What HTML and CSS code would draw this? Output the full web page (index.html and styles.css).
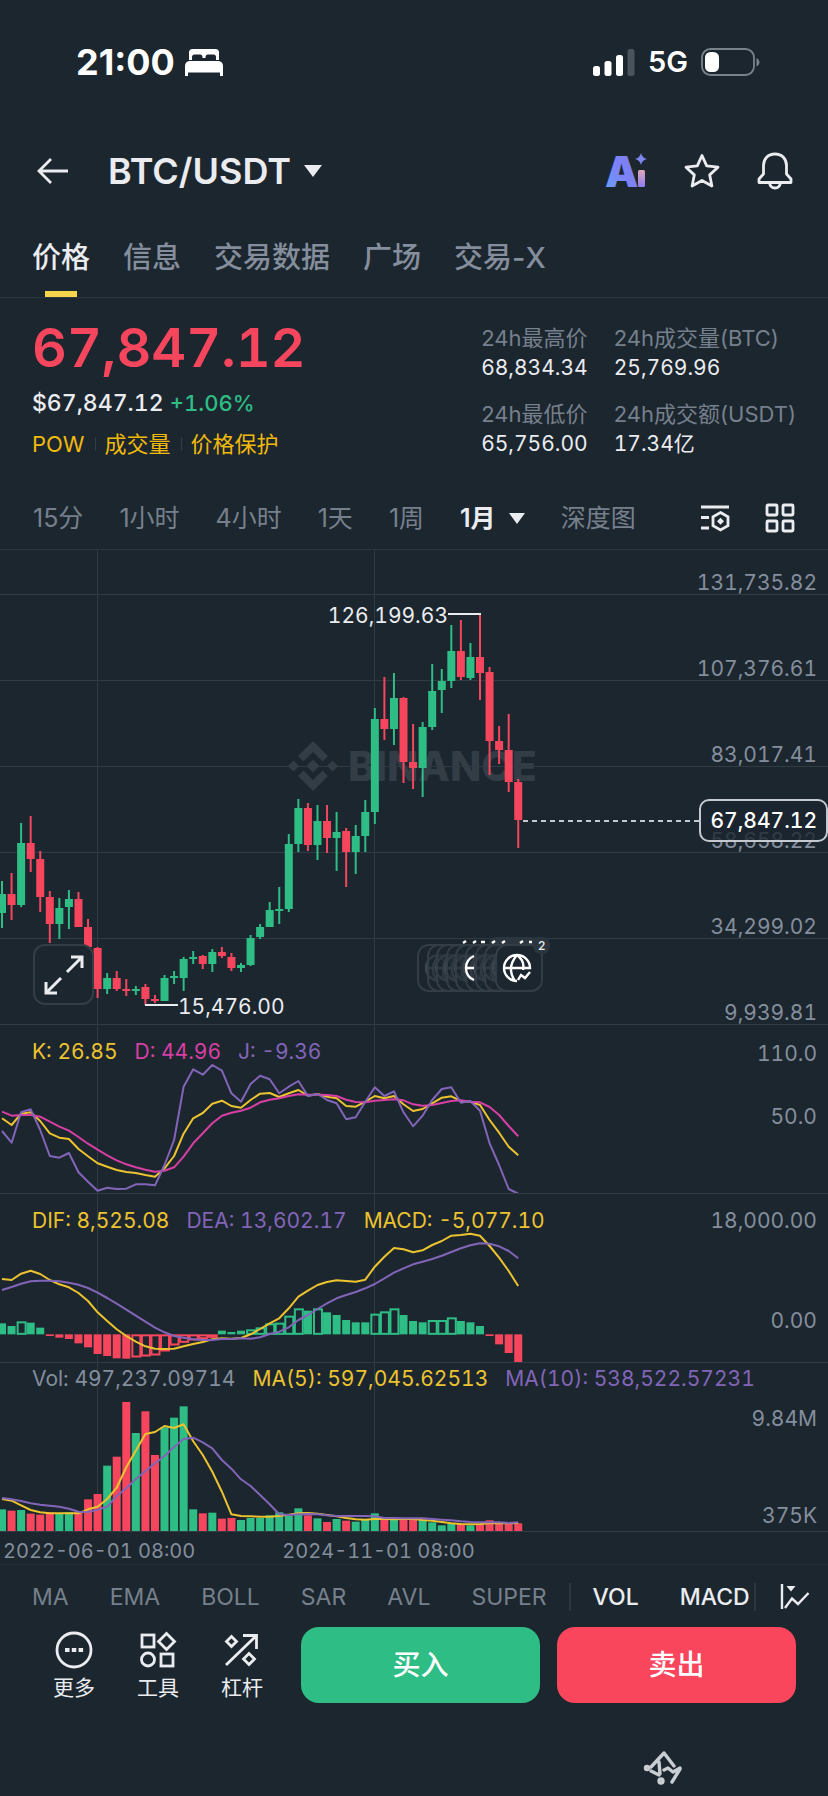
FILE: index.html
```html
<!DOCTYPE html>
<html lang="zh-CN">
<head>
<meta charset="utf-8">
<meta name="viewport" content="width=device-width, initial-scale=1">
<title>BTC/USDT</title>
<link rel="stylesheet" href="styles.css">
</head>
<body>
<div class="app">

  <div class="status">
    <div class="status-left">
      <span class="clock">21:00</span>
      <svg class="icon" width="38" height="27" viewBox="0 0 38 27" fill="#fff"><path d="M4 11V3.500Q4 0 7.500 0h23Q34 0 34 3.500V11h-3V8q0-2.500-2.500-2.500h-5.500q-2.500 0-2.500 2.500v1h-3V8q0-2.500-2.500-2.500H9.500Q7 5.500 7 8v3zM4 12h30q4 1 4 5v10h-3v-3.500H3V27H0V17q0-4 4-5z"/></svg>
    </div>
    <div class="status-right">
      <svg class="icon" width="42" height="27" viewBox="0 0 42 27" fill="#fff"><rect x="0" y="17" width="7" height="10" rx="2.500"/><rect x="11.500" y="12" width="7" height="15" rx="2.500"/><rect x="23" y="6" width="7" height="21" rx="2.500"/><rect x="34.500" y="0" width="7" height="27" rx="2.500" fill="#4a545c"/></svg>
      <span class="network">5G</span>
      <svg class="icon" width="59" height="28" viewBox="0 0 59 28"><rect x="1" y="1" width="52" height="26" rx="8.500" fill="none" stroke="#7b838a" stroke-width="1.800"/><rect x="4" y="4" width="14" height="20" rx="5.500" fill="#fff"/><path d="M55.500 10v8.500q3-1.500 3-4.250t-3-4.250z" fill="#7b838a"/></svg>
    </div>
  </div>

  <header class="header">
    <button class="icon-button" aria-label="返回"><svg class="icon" width="34" height="30" viewBox="0 0 34 30" fill="none" stroke="#eaecef" stroke-width="2.800"><path d="M33 15H4M16 3 4 15l12 12"/></svg></button>
    <button class="pair">BTC/USDT <span class="caret"></span></button>
    <nav class="header-tools">
      <button class="icon-button" aria-label="AI"><svg class="icon" width="42" height="54" viewBox="1 -8 42 54"><defs><linearGradient id="ai" x1="0" y1="1" x2="0.800" y2="0"><stop offset="0" stop-color="#62a8f5"/><stop offset="0.500" stop-color="#7d83f5"/><stop offset="1" stop-color="#7a7df0"/></linearGradient><linearGradient id="stem" x1="0" y1="0" x2="0" y2="1"><stop offset="0" stop-color="#e0a5b8"/><stop offset="1" stop-color="#8f7cf2"/></linearGradient></defs><text class="ai-letter" x="1" y="35" fill="url(#ai)">A</text><rect x="34" y="18" width="7" height="17" rx="1.500" fill="url(#stem)"/><path d="M37 1q1.200 5 6 6-4.800 1-6 6-1.200-5-6-6 4.800-1 6-6z" fill="#7f86f0"/></svg></button>
      <button class="icon-button" aria-label="收藏"><svg class="icon" width="36" height="36" viewBox="0 0 36 36" fill="none" stroke="#eaecef" stroke-width="2.800" stroke-linejoin="round"><path d="M18 2.500l4.700 10.300 11.300 1.400-8.300 7.700 2.200 11.100L18 27.500 8.100 33l2.200-11.100L2 14.200l11.300-1.400z"/></svg></button>
      <button class="icon-button" aria-label="提醒"><svg class="icon" width="36" height="38" viewBox="0 0 36 38" fill="none" stroke="#eaecef" stroke-width="2.800" stroke-linejoin="round"><path d="M18 2C11 2 6.500 7 6.500 13.500v8.500L2 27v3.500h32V27l-4.500-5v-8.500C29.500 7 25 2 18 2zM12.500 31q1 5 5.500 5t5.500-5"/></svg></button>
    </nav>
  </header>

  <nav class="tabs">
    <button class="tab is-active">价格</button>
    <button class="tab">信息</button>
    <button class="tab">交易数据</button>
    <button class="tab">广场</button>
    <button class="tab">交易-X</button>
  </nav>

  <section class="summary">
    <div class="summary-price">
      <div class="price">67,847.12</div>
      <div class="fiat">$67,847.12 <span class="gain">+1.06%</span></div>
      <div class="tags"><a class="tag" href="#pow">POW</a><a class="tag" href="#volume">成交量</a><a class="tag" href="#protect">价格保护</a></div>
    </div>
    <dl class="stats">
      <div><dt>24h最高价</dt><dd>68,834.34</dd></div>
      <div><dt>24h成交量(BTC)</dt><dd>25,769.96</dd></div>
      <div><dt>24h最低价</dt><dd>65,756.00</dd></div>
      <div><dt>24h成交额(USDT)</dt><dd>17.34亿</dd></div>
    </dl>
  </section>

  <nav class="frames">
    <button class="frame">15分</button>
    <button class="frame">1小时</button>
    <button class="frame">4小时</button>
    <button class="frame">1天</button>
    <button class="frame">1周</button>
    <button class="frame is-active">1月 <span class="caret caret-small"></span></button>
    <button class="frame">深度图</button>
    <span class="frame-tools">
      <button class="icon-button" aria-label="图表设置"><svg class="icon" width="30" height="30" viewBox="0 0 30 30" fill="none" stroke="#eaecef" stroke-width="2.800"><path d="M1 4h28M1 14.500h8M1 25h8M20.500 9.500l7.500 4.300v8.900L20.500 27 13 22.700v-8.900z"/><path d="M20.500 14.800l3.500 3.500-3.500 3.500-3.500-3.500z" fill="#eaecef" stroke="none"/></svg></button>
      <button class="icon-button" aria-label="布局"><svg class="icon" width="30" height="30" viewBox="0 0 30 30" fill="none" stroke="#eaecef" stroke-width="2.800"><rect x="2" y="2" width="10" height="10" rx="1"/><rect x="18" y="2" width="10" height="10" rx="1"/><rect x="2" y="18" width="10" height="10" rx="1"/><rect x="18" y="18" width="10" height="10" rx="1"/></svg></button>
    </span>
  </nav>

  <main class="charts">
    <section class="panel panel-main">
      <div class="watermark">
        <svg class="icon" width="50" height="50" viewBox="0 0 50 50" fill="#333d46"><path d="M25 0l15 15-5.500 5.500L25 11l-9.500 9.500L10 15zM25 50l15-15-5.500-5.500L25 39l-9.500-9.500L10 35zM5.500 19.500L11 25l-5.500 5.500L0 25zM44.500 19.500L50 25l-5.500 5.500L39 25zM25 18.500l6.500 6.500-6.500 6.500-6.500-6.500z"/></svg>
        <span>BINANCE</span>
      </div>
      <svg class="plot" id="plot-price"></svg>
      <div class="axis axis-price"><span>131,735.82</span><span>107,376.61</span><span>83,017.41</span><span>58,658.22</span><span>34,299.02</span><span>9,939.81</span></div>
      <div class="last-price"><span class="last-line"></span><span class="last-tag">67,847.12</span></div>
      <button class="expand" aria-label="全屏"><svg class="icon" width="42" height="42" viewBox="0 0 42 42" fill="none" stroke="#eaecef" stroke-width="3"><path d="M24 18L39 3M28 3h11v11M18 24L3 39M14 39H3V28"/></svg></button>
      <svg class="events" width="134" height="56" viewBox="0 0 134 56" id="events"></svg>
    </section>

    <section class="panel">
      <svg class="plot" id="plot-kdj"></svg>
      <div class="legend"><span class="yellow">K: 26.85</span><span class="pink">D: 44.96</span><span class="purple">J: -9.36</span></div>
      <div class="axis axis-kdj"><span>110.0</span><span>50.0</span></div>
    </section>

    <section class="panel">
      <svg class="plot" id="plot-macd"></svg>
      <div class="legend"><span class="yellow">DIF: 8,525.08</span><span class="purple">DEA: 13,602.17</span><span class="yellow">MACD: -5,077.10</span></div>
      <div class="axis axis-macd"><span>18,000.00</span><span>0.00</span></div>
    </section>

    <section class="panel">
      <svg class="plot" id="plot-vol"></svg>
      <div class="legend legend-tight"><span class="grey">Vol: 497,237.09714</span><span class="yellow">MA(5): 597,045.62513</span><span class="purple">MA(10): 538,522.57231</span></div>
      <div class="axis axis-vol"><span>9.84M</span><span>375K</span></div>
    </section>

    <div class="dates"><time>2022-06-01 08:00</time><time>2024-11-01 08:00</time></div>
  </main>

  <nav class="indicators">
    <div class="indicator-group group-main"><button>MA</button><button>EMA</button><button>BOLL</button><button>SAR</button><button>AVL</button><button>SUPER</button></div>
    <div class="indicator-group group-sub"><button>VOL</button><button>MACD</button></div>
    <button class="icon-button indicator-more" aria-label="指标"><svg class="icon" width="30" height="28" viewBox="0 0 30 28" fill="none" stroke="#eaecef" stroke-width="2.400"><path d="M2 1v25M5 25l7-9.500 6 5.500L28.500 10"/><path d="M6.500 3h9l-4.500 5.500z" fill="#eaecef" stroke="none"/></svg></button>
  </nav>

  <footer class="actions">
    <button class="action"><svg class="icon" width="38" height="38" viewBox="0 0 38 38" fill="none" stroke="#eaecef" stroke-width="2.800"><circle cx="19" cy="19" r="17"/><path d="M10 19h4.500M16.800 19h4.500M23.600 19h4.500" stroke-width="4"/></svg>更多</button>
    <button class="action"><svg class="icon" width="38" height="38" viewBox="0 0 38 38" fill="none" stroke="#eaecef" stroke-width="2.800"><rect x="3" y="4" width="12" height="12"/><path d="M27.500 2.500l8 8-8 8-8-8z"/><circle cx="9" cy="28.500" r="6.500"/><rect x="22" y="23" width="12" height="12"/></svg>工具</button>
    <button class="action"><svg class="icon" width="38" height="38" viewBox="0 0 38 38" fill="none" stroke="#eaecef" stroke-width="2.800"><path d="M3 34L33 5M20 4.500h13.500V18M8.500 5.500l5 5-5 5-5-5zM26 22.500l5.500 5.500-5.500 5.500-5.500-5.500z"/></svg>杠杆</button>
    <button class="trade buy">买入</button>
    <button class="trade sell">卖出</button>
  </footer>

  <div class="brand"><svg class="icon" width="42" height="38" viewBox="0 0 42 38" fill="none" stroke="#c9ced3" stroke-width="3.400" stroke-linecap="round" stroke-linejoin="round"><path d="M22 3L9 17M22 3l10 13M17 12l1 12M9 21l8 4M22 20l4-2 5 4 7-4M38 19l-8 13" /><circle cx="5" cy="18" r="1.500"/><circle cx="19" cy="31" r="2"/></svg></div>
</div>
<script src="chart.js"></script>
</body>
</html>
```
FILE: styles.css
```css
* { box-sizing: border-box; }

body {
  margin: 0;
  background: #1c262f;
  color: #eaecef;
  font: 400 22px/30px Inter, "Noto Sans CJK SC", sans-serif;
}

button {
  padding: 0;
  border: 0;
  background: none;
  color: inherit;
  font: inherit;
  white-space: nowrap;
}

.icon { display: block; flex: none; }
.icon-button { display: flex; align-items: center; }

/* status bar */
.status {
  display: flex;
  justify-content: space-between;
  padding: 36px 68px 0 76px;
  color: #fff;
  line-height: 52px;
}
.status-left, .status-right { display: flex; align-items: center; }
.status-left { gap: 10px; }
.status-right { gap: 13px; }
.clock { font-size: 36px; font-weight: 700; }
.network { font-size: 29px; font-weight: 600; }

/* header */
.header {
  display: flex;
  align-items: center;
  height: 60px;
  margin-top: 53px;
  padding: 0 35px;
}
.pair {
  display: flex;
  align-items: center;
  gap: 13px;
  margin-left: 39px;
  font-size: 36px;
  font-weight: 600;
}
.caret {
  border: solid transparent;
  border-width: 12px 9px 0;
  border-top-color: #eaecef;
}
.caret-small { border-width: 11px 8px 0; }
.header-tools { display: flex; align-items: center; gap: 37px; margin-left: auto; }
.ai-letter { font: 900 42px Inter, sans-serif; }

/* section tabs */
.tabs {
  display: flex;
  gap: 33px;
  margin-top: 37px;
  padding: 0 32px;
  border-bottom: 1px solid #2b363f;
}
.tab {
  position: relative;
  padding-bottom: 19px;
  color: #848e9c;
  font-size: 29px;
  font-weight: 500;
  line-height: 40px;
}
.tab.is-active { color: #eaecef; }
.tab.is-active::after {
  content: "";
  position: absolute;
  bottom: 0;
  left: 50%;
  width: 32px;
  height: 6px;
  margin-left: -16px;
  background: #f5d54c;
}

/* price summary */
.summary {
  display: flex;
  justify-content: space-between;
  padding: 20px 32px 0;
  font-variant-numeric: tabular-nums;
}
.summary-price { display: grid; gap: 10px; }
.price { color: #f6465d; font-size: 54px; font-weight: 600; line-height: 60px; }
.fiat { font-size: 23px; font-weight: 500; }
.gain { color: #2ebd85; font-size: 22px; }
.tags { display: flex; color: #f0b90b; }
.tag { color: inherit; text-decoration: none; }
.tag + .tag { margin-left: 10px; padding-left: 10px; background: linear-gradient(#333d46, #333d46) 0 50% / 1px 14px no-repeat; }
.stats {
  display: grid;
  grid-template-columns: auto auto;
  gap: 16px 26px;
  align-content: start;
  margin: 0;
  padding-top: 5px;
}
.stats dt { color: #76808c; font-variant-numeric: normal; }
.stats dd { margin: 0; font-size: 21px; }

/* time frames */
.frames {
  display: flex;
  align-items: center;
  gap: 36px;
  height: 63px;
  margin-top: 28px;
  padding: 0 33px;
  border-bottom: 1px solid #2b363f;
  color: #76808c;
  font-size: 25px;
}
.frame.is-active { display: flex; align-items: center; gap: 13px; color: #eaecef; font-weight: 600; }
.frame-tools { display: flex; gap: 35px; margin-left: auto; }

/* charts */
.panel {
  position: relative;
  height: 169px;
  border-bottom: 1px solid #303b43;
  font-size: 21px;
  font-variant-numeric: tabular-nums;
}
.panel-main { height: 475px; }
.plot { position: absolute; inset: 0; width: 100%; height: 100%; }
.plot text { fill: #eaecef; font-size: 21px; }
.grid { stroke: #303b43; }
.up { fill: #2ebd85; stroke: #2ebd85; }
.down { fill: #f6465d; stroke: #f6465d; }
.body { stroke: none; }
.hollow { fill: none; stroke-width: 2; }
.wick { stroke-width: 2; }
.leader { stroke: #eaecef; stroke-width: 2; }
.line { fill: none; stroke-width: 2; stroke-linejoin: round; }
.line-yellow { stroke: #ecc32f; }
.line-pink { stroke: #d83fa5; }
.line-purple { stroke: #8265b8; }

.watermark {
  position: absolute;
  top: 191px;
  left: 288px;
  display: flex;
  align-items: center;
  gap: 10px;
  color: #333d46;
  font-size: 41px;
  font-weight: 800;
  line-height: 50px;
}

.axis {
  position: relative;
  display: flex;
  flex-direction: column;
  justify-content: space-between;
  height: 100%;
  padding: 0 11px;
  color: #848e9c;
  text-align: right;
}
.axis-price { display: grid; grid-template: 44px repeat(5, 1fr) / 100%; }
.axis-price span { align-self: end; line-height: 22px; }
.axis-kdj { justify-content: flex-start; gap: 33px; padding-top: 14px; }
.axis-macd { padding-top: 12px; padding-bottom: 26px; }
.axis-vol { padding-top: 41px; }

.last-price {
  position: absolute;
  top: 249px;
  right: 0;
  left: 523px;
  display: flex;
  align-items: center;
}
.last-line {
  flex: 1;
  height: 2px;
  background: repeating-linear-gradient(90deg, #c3c9cf 0 5px, transparent 5px 9px);
}
.last-tag {
  padding: 5px 9px 4px;
  border: 2px solid #c3c9cf;
  border-radius: 10px;
  background: rgba(28, 38, 47, 0.8);
  color: #fff;
  font-weight: 500;
}
.expand {
  position: absolute;
  bottom: 19px;
  left: 33px;
  display: grid;
  place-items: center;
  width: 61px;
  height: 61px;
  border: 2px solid #333d46;
  border-radius: 12px;
  background: #1c262f;
}
.events { position: absolute; bottom: 31px; left: 417px; }
.event-card { fill: rgba(28, 38, 47, 0.35); stroke: #333d46; stroke-width: 2; }
.event-card.is-last { fill: #1c262f; }
.event-globe { fill: none; stroke: #fff; stroke-width: 2.4; }
.event-globe.is-dim { stroke: #3b454e; }
.event-pill { fill: #2b363f; }
.event-count { fill: #eaecef; font: 500 12px Inter, sans-serif; }

.legend {
  position: absolute;
  top: 12px;
  left: 32px;
  display: flex;
  gap: 17px;
  white-space: nowrap;
}
.legend-tight { top: 1px; }
.yellow { color: #ecc32f; }
.pink { color: #d83fa5; }
.purple { color: #8265b8; }
.grey { color: #848e9c; }

.dates {
  display: flex;
  gap: 87px;
  height: 33px;
  padding: 5px 3px 0;
  border-bottom: 1px solid #26313a;
  color: #848e9c;
  font-size: 20px;
  font-variant-numeric: tabular-nums;
  line-height: 28px;
}

/* indicator strip */
.indicators {
  display: flex;
  align-items: center;
  height: 62px;
  padding: 1px 18px 0 32px;
  font-size: 23px;
}
.indicator-group { display: flex; gap: 41px; height: 28px; border-right: 2px solid #2b363f; line-height: 28px; }
.group-main { padding-right: 22px; color: #76808c; }
.group-sub { padding-left: 22px; padding-right: 4px; font-weight: 500; }
.indicator-more { margin-left: auto; }

/* bottom actions */
.actions { display: flex; padding: 0 32px; }
.action {
  display: flex;
  flex-direction: column;
  align-items: center;
  justify-content: space-between;
  width: 84px;
  padding-top: 4px;
  font-size: 21px;
  line-height: 30px;
}
.trade {
  flex: 1;
  height: 76px;
  margin-left: 17px;
  border-radius: 18px;
  color: #fff;
  font-size: 28px;
  font-weight: 500;
}
.buy { background: #2ebd85; }
.sell { background: #fa465c; }

.brand {
  display: flex;
  justify-content: flex-end;
  padding: 47px 144px 8px;
}
```
FILE: chart.js
```js
const NS = 'http://www.w3.org/2000/svg';
const STEP = 9.56;
const START = 2;
const xAt = i => START + i * STEP;

function add(parent, tag, attrs, text) {
  const el = document.createElementNS(NS, tag);
  for (const key in attrs) el.setAttribute(key, attrs[key]);
  if (text) el.textContent = text;
  parent.appendChild(el);
  return el;
}

function verticals(svg) {
  for (const i of [10, 39]) {
    const x = Math.floor(xAt(i)) + 0.5;
    add(svg, 'line', { class: 'grid', x1: x, x2: x, y1: 0, y2: '100%' });
  }
}

// Indicator values are plotted in thirds of a pixel.
function line(svg, name, values, offset) {
  const points = values.map((v, i) => xAt(i).toFixed(1) + ',' + ((v - offset) / 3).toFixed(1)).join(' ');
  add(svg, 'polyline', { class: 'line line-' + name, points });
}

// high, open/close top, open/close bottom, low, rising
const candles = [
  [331,344,363,378,1],[323,344,355,370,0],[273,293,355,357,1],[266,293,309,322,0],[301,309,347,362,0],
  [341,347,374,393,0],[348,358,374,389,1],[340,349,357,379,1],[342,349,377,377,0],[369,377,397,397,0],
  [397,398,439,448,0],[423,428,439,444,1],[421,428,439,441,0],[429,439,441,446,0],[436,439,441,445,1],
  [434,437,449,455,0],[445,449,451,453,0],[425,428,451,451,1],[421,426,428,434,1],[407,409,428,441,1],
  [401,407,409,414,1],[405,406,414,419,0],[399,402,414,422,1],[397,402,406,408,0],[403,407,418,421,0],
  [413,415,418,422,1],[385,388,415,416,1],[374,377,387,389,1],[352,360,377,377,1],[337,359,361,374,1],
  [284,294,359,362,1],[249,258,294,302,1],[253,258,295,301,0],[255,271,295,310,1],[255,271,288,303,0],
  [262,282,288,321,1],[278,281,302,337,0],[275,286,302,324,1],[250,262,286,302,1],[158,169,262,274,1],
  [127,169,179,190,0],[123,148,179,195,1],[147,148,212,233,0],[174,212,218,239,0],[172,177,218,247,1],
  [114,141,177,180,1],[119,131,140,163,1],[75,101,131,138,1],[70,101,127,130,0],[93,107,128,130,1],
  [63,107,123,150,0],[117,122,191,225,0],[176,191,200,214,0],[164,200,232,242,0],[229,232,270,298,0]
];

const price = document.getElementById('plot-price');
verticals(price);
for (let row = 0; row < 5; row++) {
  const y = 44.5 + row * 86;
  add(price, 'line', { class: 'grid', x1: 0, x2: '100%', y1: y, y2: y });
}
candles.forEach(([high, top, bottom, low, rising], i) => {
  const tone = rising ? 'up' : 'down';
  const x = xAt(i);
  add(price, 'line', { class: 'wick ' + tone, x1: x, x2: x, y1: high, y2: low });
  add(price, 'rect', { class: 'body ' + tone, x: x - 4, y: top, width: 8, height: bottom - top });
});
add(price, 'line', { class: 'leader', x1: 448, x2: 481, y1: 64, y2: 64 });
add(price, 'text', { x: 448, y: 73, 'text-anchor': 'end' }, '126,199.63');
add(price, 'line', { class: 'leader', x1: 145, x2: 178, y1: 455, y2: 455 });
add(price, 'text', { x: 178, y: 464 }, '15,476.00');

const kdj = document.getElementById('plot-kdj');
verticals(kdj);
line(kdj, 'yellow', [280,300,266,262,288,325,338,342,372,394,415,425,435,441,444,450,455,430,393,326,280,264,236,227,243,248,225,206,204,216,205,195,212,207,215,220,243,245,230,213,220,213,238,258,252,235,218,214,228,230,240,285,323,365,391], 0);
line(kdj, 'pink', [260,272,270,270,275,290,305,317,336,356,374,391,406,418,427,434,440,437,427,395,355,325,295,272,263,257,248,232,224,220,213,208,209,209,210,213,224,231,232,227,225,223,226,238,242,240,234,228,226,230,232,246,270,303,334], 0);
line(kdj, 'purple', [318,353,262,253,315,393,398,384,442,470,497,488,492,491,478,478,481,420,345,185,133,149,120,137,205,230,177,152,163,205,185,168,213,207,225,235,283,277,230,187,213,199,262,304,272,225,192,187,233,228,257,355,420,492,506], 0);

const macd = document.getElementById('plot-macd');
verticals(macd);
const ZERO = 928;
const MACD_TOP = 507;
const bars = [895,903,889,893,908,933,938,942,955,967,987,993,1000,1001,996,993,990,978,960,952,945,941,937,917,921,917,913,907,895,893,872,850,857,850,862,870,885,892,892,866,859,850,870,888,892,885,885,877,888,892,903,933,958,984,1011];
const hollow = new Set([2,14,15,16,17,18,19,20,21,22,26,27,28,29,30,31,33,39,40,41,45,46,47]);
bars.forEach((v, i) => {
  const tone = v < ZERO ? 'up' : 'down';
  const y = (Math.min(v, ZERO) - MACD_TOP) / 3;
  const h = Math.abs(v - ZERO) / 3;
  const x = xAt(i) - 4;
  if (hollow.has(i)) {
    add(macd, 'rect', { class: 'hollow ' + tone, x: x + 0.5, y: y + 1, width: 8, height: Math.max(h - 1.5, 1) });
  } else {
    add(macd, 'rect', { class: 'body ' + tone, x, y, width: 8, height: h });
  }
});
line(macd, 'yellow', [762,765,746,737,747,765,778,787,804,828,862,888,913,933,950,964,971,972,971,964,957,951,943,940,941,939,928,912,895,880,850,815,797,780,771,766,768,770,764,725,695,669,673,682,676,660,648,632,630,626,632,663,698,738,783], MACD_TOP);
line(macd, 'purple', [795,786,776,769,767,767,769,773,779,789,803,819,836,854,872,890,908,922,933,938,943,945,945,942,942,940,941,937,927,920,907,885,870,852,835,820,810,801,790,777,760,743,730,718,710,702,692,681,670,661,655,656,664,678,700], MACD_TOP);

const vol = document.getElementById('plot-vol');
verticals(vol);
const VOL_TOP = 9;
const VOL_BASE = 513;
const volumes = [448,452,450,461,464,457,461,457,457,418,402,317,290,126,219,154,285,202,173,139,448,460,458,476,474,480,474,474,466,457,468,445,466,475,486,477,482,485,480,460,478,480,480,478,480,487,496,492,492,496,492,481,492,491,490];
const falling = new Set([1,3,4,5,8,9,10,12,13,15,16,21,23,24,32,34,36,40,42,43,48,50,51,52,53,54]);
volumes.forEach((v, i) => {
  add(vol, 'rect', { class: 'body ' + (falling.has(i) ? 'down' : 'up'), x: xAt(i) - 4, y: (v - VOL_TOP) / 3, width: 8, height: (VOL_BASE - v) / 3 });
});
line(vol, 'yellow', [417,422,436,450,457,460,460,460,460,448,440,417,383,322,272,222,216,198,204,193,244,285,335,395,463,468,469,470,470,468,464,460,459,461,465,469,474,478,479,477,477,478,477,477,480,482,486,490,492,493,492,490,489,490,489], VOL_TOP);
line(vol, 'purple', [414,418,423,430,434,437,440,446,455,456,449,440,408,385,357,334,310,288,261,237,233,247,265,300,326,358,378,405,433,463,465,463,462,463,466,468,468,468,468,469,474,474,475,475,475,477,479,481,484,486,487,487,487,489,487], VOL_TOP);

// Overlapping event markers; only the newest is fully visible.
const events = document.getElementById('events');
const GLOBE = 'M13 0A13 13 0 1 0 13 26M13 0A13 13 0 0 1 26 13H0M13 0Q2 13 11 26M13 0Q21 6 19 15M14 25l3-5 4 3 5-6';
[0, 10, 19, 29, 38, 48, 58, 67, 78].forEach((x, i, all) => {
  const last = i === all.length - 1;
  if (i > 3) add(events, 'rect', { class: 'event-pill', x: x + 34, y: 0, width: 20, height: 14, rx: 7 });
  add(events, 'rect', { class: 'event-card' + (last ? ' is-last' : ''), x: x + 1, y: 8, width: 46, height: 46, rx: 11 });
  add(events, 'path', { class: 'event-globe' + (last ? '' : ' is-dim'), d: GLOBE, transform: `translate(${x + 9} 18)` });
});
add(events, 'path', { class: 'event-globe', d: 'M57 19A13 13 0 0 0 57 43M49 31h8' });
add(events, 'path', { class: 'event-globe', d: 'M46 6l3-2M56 6l3-2M64 5h4M75 6l3-2M85 6l3-2M103 6l3-2M112 5h3' });
add(events, 'rect', { class: 'event-pill', x: 116, y: 0, width: 17, height: 17, rx: 8 });
add(events, 'text', { class: 'event-count', x: 121, y: 13 }, '2');
```
